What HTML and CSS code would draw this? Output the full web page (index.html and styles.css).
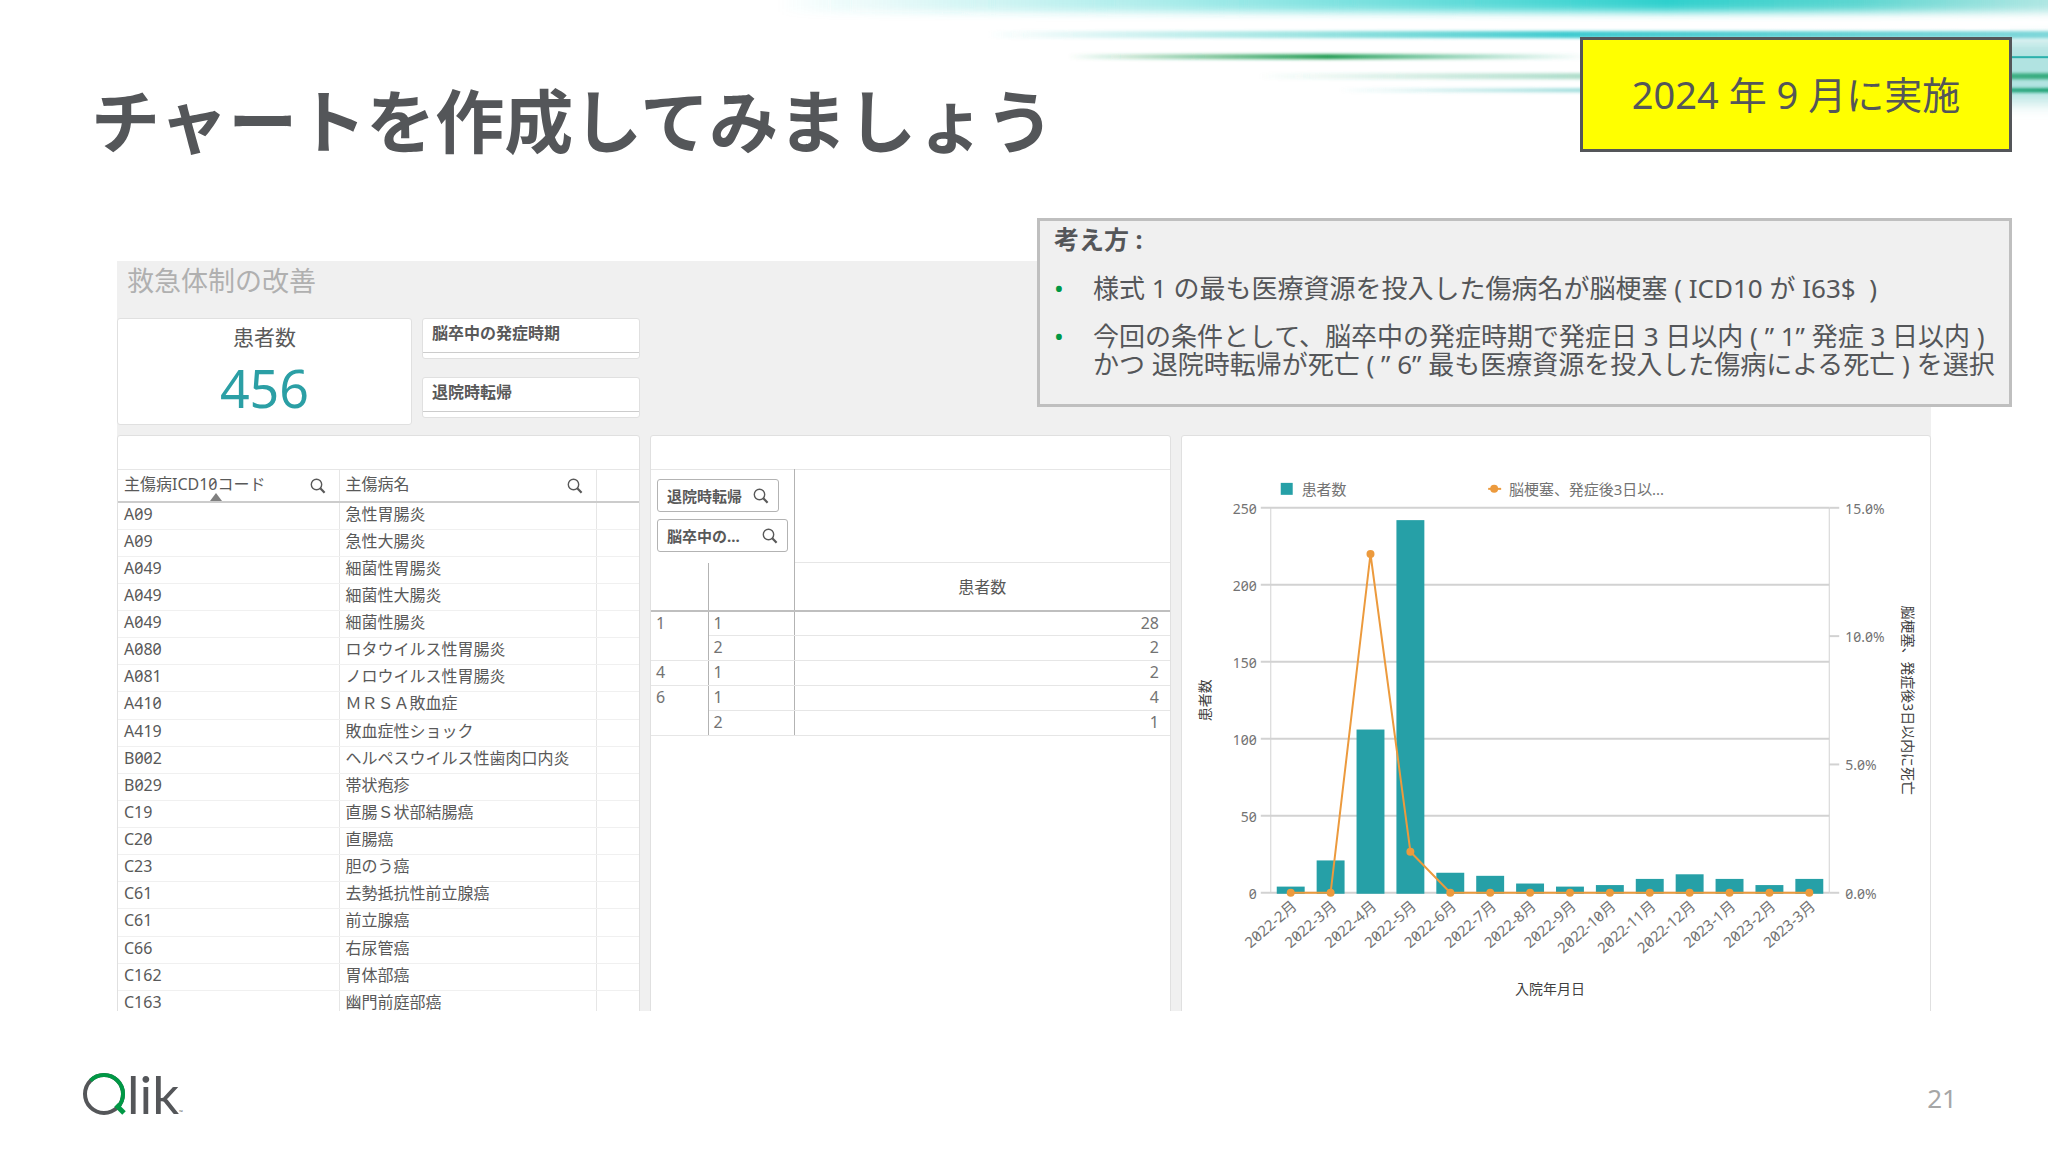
FILE: index.html
```html
<!DOCTYPE html>
<html lang="ja">
<head>
    <meta charset="UTF-8">
    <meta name="viewport" content="width=device-width, initial-scale=1.0">
    <title>チャートを作成してみましょう</title>
    <link rel="stylesheet" href="styles.css">
</head>
<body>
    <svg width="0" height="0" class="defs" aria-hidden="true">
        <symbol id="search" viewBox="0 0 16 16">
            <circle cx="6.5" cy="6.5" r="5.2" fill="none" stroke="#595959" stroke-width="1.4"/>
            <path d="M10.3 10.3 L14.6 14.8" stroke="#595959" stroke-width="2.2"/>
        </symbol>
    </svg>

    <div class="slide">
        <!-- light streaks in the corner -->
        <svg class="streaks" viewBox="0 0 1368 150" aria-hidden="true">
            <defs>
                <linearGradient id="g1">
                    <stop offset="0" stop-color="#2fd0cd" stop-opacity="0"/>
                    <stop offset="0.3" stop-color="#2fd0cd" stop-opacity="0.4"/>
                    <stop offset="0.7" stop-color="#2fd0cd"/>
                    <stop offset="0.85" stop-color="#40cfc8" stop-opacity="0.85"/>
                    <stop offset="1" stop-color="#60cfc8" stop-opacity="0.5"/>
                </linearGradient>
                <linearGradient id="g2">
                    <stop offset="0" stop-color="#3cc9c4" stop-opacity="0"/>
                    <stop offset="0.3" stop-color="#3cc9c4" stop-opacity="0.5"/>
                    <stop offset="0.55" stop-color="#3fcbd0"/>
                    <stop offset="1" stop-color="#4fc8cc" stop-opacity="0.7"/>
                </linearGradient>
                <linearGradient id="g3">
                    <stop offset="0" stop-color="#1c9a50" stop-opacity="0"/>
                    <stop offset="0.5" stop-color="#1c9a50"/>
                    <stop offset="1" stop-color="#4cc0a0" stop-opacity="0"/>
                </linearGradient>
                <linearGradient id="g4">
                    <stop offset="0" stop-color="#35ab7d" stop-opacity="0"/>
                    <stop offset="1" stop-color="#35ab7d"/>
                </linearGradient>
                <linearGradient id="g5">
                    <stop offset="0" stop-color="#35b7b5" stop-opacity="0"/>
                    <stop offset="0.5" stop-color="#35b7b5" stop-opacity="0.7"/>
                    <stop offset="1" stop-color="#119c6a"/>
                </linearGradient>
                <filter id="soft" x="-5%" y="-200%" width="110%" height="500%"><feGaussianBlur stdDeviation="0 4"/></filter>
                <filter id="fine" x="-5%" y="-200%" width="110%" height="500%"><feGaussianBlur stdDeviation="0 1.6"/></filter>
                <filter id="wide" x="-50%" y="-50%" width="200%" height="200%"><feGaussianBlur stdDeviation="0 8"/></filter>
            </defs>
            <rect x="100" y="-14" width="1268" height="26" fill="url(#g1)" filter="url(#soft)"/>
            <rect x="1330" y="40" width="38" height="62" fill="#a9e0de" opacity="0.9" filter="url(#wide)"/>
            <rect x="310" y="31" width="1058" height="7" fill="url(#g2)" filter="url(#fine)"/>
            <rect x="390" y="54" width="520" height="5" fill="url(#g3)" filter="url(#fine)"/>
            <rect x="1300" y="56" width="68" height="2" fill="#2bb0ac"/>
            <rect x="580" y="73" width="788" height="6" fill="url(#g4)" filter="url(#fine)"/>
            <rect x="660" y="88" width="708" height="4" fill="url(#g5)" filter="url(#fine)"/>
        </svg>

        <header class="slide-head">
            <h1>チャートを作成してみましょう</h1>
            <div class="badge">2024 年 9 月に実施</div>
        </header>

        <main class="content">
            <div class="sheet">
                <h2>救急体制の改善</h2>

                <div class="top-row">
                    <div class="kpi-area">
                        <section class="card kpi">
                            <div class="kpi-label">患者数</div>
                            <div class="kpi-value">456</div>
                        </section>
                        <div class="filters">
                            <section class="card filter"><h3>脳卒中の発症時期</h3></section>
                            <section class="card filter"><h3>退院時転帰</h3></section>
                        </div>
                    </div>
                </div>

                <div class="cards">
                    <section class="card list">
                        <table class="codes">
                            <thead>
                                <tr>
                                    <th class="sorted"><div class="th">主傷病ICD10コード<svg class="icon"><use href="#search"/></svg></div></th>
                                    <th><div class="th">主傷病名<svg class="icon"><use href="#search"/></svg></div></th>
                                    <th></th>
                                </tr>
                            </thead>
                            <tbody>
                                <tr><td>A09</td><td>急性胃腸炎</td><td></td></tr>
                                <tr><td>A09</td><td>急性大腸炎</td><td></td></tr>
                                <tr><td>A049</td><td>細菌性胃腸炎</td><td></td></tr>
                                <tr><td>A049</td><td>細菌性大腸炎</td><td></td></tr>
                                <tr><td>A049</td><td>細菌性腸炎</td><td></td></tr>
                                <tr><td>A080</td><td>ロタウイルス性胃腸炎</td><td></td></tr>
                                <tr><td>A081</td><td>ノロウイルス性胃腸炎</td><td></td></tr>
                                <tr><td>A410</td><td>ＭＲＳＡ敗血症</td><td></td></tr>
                                <tr><td>A419</td><td>敗血症性ショック</td><td></td></tr>
                                <tr><td>B002</td><td>ヘルペスウイルス性歯肉口内炎</td><td></td></tr>
                                <tr><td>B029</td><td>帯状疱疹</td><td></td></tr>
                                <tr><td>C19</td><td>直腸Ｓ状部結腸癌</td><td></td></tr>
                                <tr><td>C20</td><td>直腸癌</td><td></td></tr>
                                <tr><td>C23</td><td>胆のう癌</td><td></td></tr>
                                <tr><td>C61</td><td>去勢抵抗性前立腺癌</td><td></td></tr>
                                <tr><td>C61</td><td>前立腺癌</td><td></td></tr>
                                <tr><td>C66</td><td>右尿管癌</td><td></td></tr>
                                <tr><td>C162</td><td>胃体部癌</td><td></td></tr>
                                <tr><td>C163</td><td>幽門前庭部癌</td><td></td></tr>
                            </tbody>
                        </table>
                    </section>

                    <section class="card pivot-card">
                        <table class="pivot">
                            <colgroup><col class="c1"><col class="c2"><col></colgroup>
                            <thead>
                                <tr>
                                    <th colspan="2" class="dims">
                                        <button type="button">退院時転帰<svg class="icon"><use href="#search"/></svg></button>
                                        <button type="button" class="long">脳卒中の...<svg class="icon"><use href="#search"/></svg></button>
                                    </th>
                                    <th></th>
                                </tr>
                                <tr class="measure"><th></th><th></th><th>患者数</th></tr>
                            </thead>
                            <tbody>
                                <tr><td rowspan="2">1</td><td>1</td><td>28</td></tr>
                                <tr><td>2</td><td>2</td></tr>
                                <tr><td>4</td><td>1</td><td>2</td></tr>
                                <tr><td rowspan="2">6</td><td>1</td><td>4</td></tr>
                                <tr><td>2</td><td>1</td></tr>
                            </tbody>
                        </table>
                    </section>

                    <section class="card chart-card">
                        <svg id="chart" class="chart" viewBox="0 0 750 575"></svg>
                    </section>
                </div>
            </div>

            <aside class="note">
                <h3>考え方 :</h3>
                <ul>
                    <li>様式 1 の最も医療資源を投入した傷病名が脳梗塞 ( ICD10 が I63$ &nbsp;)</li>
                    <li>今回の条件として、脳卒中の発症時期で発症日 3 日以内 ( ” 1” 発症 3 日以内 )<br>かつ 退院時転帰が死亡 ( ” 6” 最も医療資源を投入した傷病による死亡 ) を選択</li>
                </ul>
            </aside>
        </main>

        <footer>
            <svg class="logo" width="112" height="48" viewBox="0 0 112 48" role="img" aria-label="Qlik">
                <circle cx="22" cy="24" r="19" fill="none" stroke="#545659" stroke-width="4"/>
                <path d="M8.5 10.6 A19 19 0 0 1 35.5 37.4" fill="none" stroke="#009845" stroke-width="4"/>
                <path d="M34 35 L42 43" stroke="#009845" stroke-width="5"/>
                <text x="45" y="44" class="logo-text">lik</text>
                <text x="97" y="44" class="logo-tm">™</text>
            </svg>
            <span class="page">21</span>
        </footer>
    </div>

    <script>
        const months = ["2022-2月", "2022-3月", "2022-4月", "2022-5月", "2022-6月", "2022-7月", "2022-8月",
                        "2022-9月", "2022-10月", "2022-11月", "2022-12月", "2023-1月", "2023-2月", "2023-3月"];
        const patients = [4, 21, 106, 242, 13, 11, 6, 4, 5, 9, 12, 9, 5, 9];
        const rate = [0, 0, 13.2, 1.6, 0, 0, 0, 0, 0, 0, 0, 0, 0, 0];

        // plot area inside the card
        const left = 89, right = 649, top1 = 72, bottom = 458;
        const step = (right - left) / months.length;
        const y1 = v => bottom - v / 250 * (bottom - top1);
        const y2 = v => bottom - v / 15 * (bottom - top1);
        const cx = i => left + step * (i + 0.5);

        let out = "";
        for (let v = 0; v <= 250; v += 50) {
            out += `<line class="grid" x1="79" x2="${right}" y1="${y1(v)}" y2="${y1(v)}"/>`;
            out += `<text class="tick" x="75" y="${y1(v) + 6}" text-anchor="end">${v}</text>`;
        }
        for (let v = 0; v <= 15; v += 5) {
            out += `<line class="grid" x1="${right}" x2="${right + 10}" y1="${y2(v)}" y2="${y2(v)}"/>`;
            out += `<text class="tick" x="${right + 16}" y="${y2(v) + 6}">${v.toFixed(1)}%</text>`;
        }
        out += `<line class="axis" x1="${left}" x2="${left}" y1="${top1}" y2="${bottom}"/>`;
        out += `<line class="axis" x1="${right}" x2="${right}" y1="${top1}" y2="${bottom}"/>`;
        months.forEach((m, i) => {
            out += `<rect class="bar" x="${cx(i) - 14}" y="${y1(patients[i])}" width="28" height="${bottom - y1(patients[i]) + 1}"/>`;
            out += `<text class="month" transform="translate(${cx(i) + 7} ${bottom + 15}) rotate(-41)" text-anchor="end">${m}</text>`;
        });
        out += `<polyline class="rate" points="${rate.map((r, i) => cx(i) + "," + y2(r)).join(" ")}"/>`;
        rate.forEach((r, i) => {
            out += `<circle class="dot" cx="${cx(i)}" cy="${y2(r)}" r="4"/>`;
        });

        // legend and axis titles
        out += `<rect class="bar" x="99" y="47" width="12" height="12"/><text class="label" x="120" y="59">患者数</text>`;
        out += `<line class="rate" x1="307" x2="320" y1="53" y2="53"/><circle class="dot" cx="313" cy="53" r="4"/>`;
        out += `<text class="label" x="328" y="59">脳梗塞、発症後3日以...</text>`;
        out += `<text class="title" x="369" y="560" text-anchor="middle">入院年月日</text>`;
        out += `<text class="title" transform="translate(28 265) rotate(-90)" text-anchor="middle">患者数</text>`;
        out += `<text class="title" transform="translate(723 265) rotate(90)" text-anchor="middle">脳梗塞、発症後3日以内に死亡</text>`;
        document.getElementById("chart").innerHTML = out;
    </script>
</body>
</html>
```
FILE: styles.css
```css
* {
    box-sizing: border-box;
}
body {
    margin: 0;
    background-color: #fff;
    color: #545659;
    font-family: "Noto Sans", "Noto Sans CJK JP", sans-serif;
    font-variant-numeric: slashed-zero;
}
h1, h2, h3, ul {
    margin: 0;
    padding: 0;
}
.defs {
    position: absolute;
}
.slide {
    position: relative;
    min-height: 100vh;
    display: flex;
    flex-direction: column;
    overflow: hidden;
}
.streaks {
    position: absolute;
    top: 0;
    right: 0;
    width: 67%;
}
.slide-head {
    position: relative;
    display: flex;
    justify-content: space-between;
    align-items: flex-start;
    height: 261px;
    padding: 37px 36px 0 91px;
    flex: none;
}
h1 {
    margin-top: 34px;
    font-size: 69px;
    line-height: 100px;
    font-weight: bold;
}
.badge {
    width: 432px;
    height: 115px;
    border: 3px solid #545659;
    background-color: #ff0;
    font-size: 38px;
    line-height: 109px;
    text-align: center;
    font-variant-numeric: normal;
}
.content {
    position: relative;
    margin: 0 117px;
}
.sheet {
    height: 750px;
    overflow: hidden;
    background-color: #f0f0f0;
    color: #595959;
    font-size: 16px;
}
.sheet h2 {
    height: 57px;
    padding-left: 10px;
    font-size: 27px;
    line-height: 40px;
    font-weight: normal;
    color: #b0b0b0;
}
.card {
    background-color: #fff;
    border: 1px solid #e0e0e0;
    border-radius: 3px;
}
.top-row, .cards {
    display: grid;
    grid-template-columns: 523fr 521fr 750fr;
    gap: 10px;
}
.kpi-area {
    display: flex;
    gap: 10px;
    height: 107px;
}
.kpi {
    flex: 1;
    text-align: center;
}
.kpi-label {
    font-size: 21px;
    line-height: 36px;
}
.kpi-value {
    font-size: 52px;
    line-height: 66px;
    color: #2b9fa5;
}
.filters {
    width: 218px;
    display: flex;
    flex-direction: column;
    gap: 18px;
}
.filter {
    height: 41px;
}
.filter h3 {
    height: 34px;
    padding-left: 9px;
    border-bottom: 1px solid #ccc;
    font-size: 16px;
    line-height: 29px;
}
.cards {
    margin-top: 10px;
}
.cards .card {
    height: 600px;
}
.icon {
    width: 16px;
    height: 16px;
    flex: none;
}
table {
    width: 100%;
    border-collapse: collapse;
    table-layout: fixed;
}
th {
    font-weight: normal;
}
.list, .pivot-card {
    padding-top: 33px;
}
.codes {
    height: 549px;
    border-top: 1px solid #e6e6e6;
}
.codes th, .codes td {
    padding: 0 0 0 6px;
    text-align: left;
    line-height: 22px;
    border-right: 1px solid #e6e6e6;
    vertical-align: top;
}
.codes td {
    border-bottom: 1px solid #f0f0f0;
}
.codes th:first-child {
    width: 221px;
}
.codes th:last-child {
    width: 43px;
}
.codes th:last-child, .codes td:last-child {
    border-right: 0;
}
.codes th {
    height: 32px;
    border-bottom: 2px solid #ccc;
}
.th {
    display: flex;
    justify-content: space-between;
    align-items: center;
    padding-right: 13px;
    line-height: 28px;
}
.th .icon {
    margin-top: 4px;
}
.sorted {
    position: relative;
}
.sorted::after {
    content: "";
    position: absolute;
    bottom: 0;
    left: 50%;
    margin-left: -18px;
    border: 6px solid transparent;
    border-top: 0;
    border-bottom: 8px solid #808080;
}
.pivot {
    border-top: 1px solid #e6e6e6;
}
.pivot .c1 {
    width: 57px;
}
.pivot .c2 {
    width: 86px;
}
.pivot .dims {
    height: 93px;
    padding: 9px 0 0 6px;
    text-align: left;
    vertical-align: top;
    border-right: 1px solid #b3b3b3;
}
.dims button {
    display: flex;
    justify-content: space-between;
    align-items: center;
    width: 122px;
    height: 33px;
    margin-bottom: 7px;
    padding: 0 9px;
    border: 1px solid #b3b3b3;
    border-radius: 3px;
    background-color: #fff;
    color: #595959;
    font-family: inherit;
    font-size: 15px;
    font-weight: bold;
    white-space: nowrap;
}
.dims .long {
    width: 131px;
}
.measure th {
    height: 48px;
    border-right: 1px solid #b3b3b3;
    border-bottom: 2px solid #bfbfbf;
}
.measure th:last-child {
    border-right: 0;
    border-top: 1px solid #e6e6e6;
}
.pivot td {
    height: 25px;
    padding: 0 5px;
    line-height: 22px;
    vertical-align: top;
    color: #737373;
    border-right: 1px solid #b3b3b3;
    border-bottom: 1px solid #e6e6e6;
}
.pivot td:last-child {
    padding-right: 11px;
    text-align: right;
    border-right: 0;
}
.chart {
    display: block;
    width: 100%;
}
.grid, .axis {
    stroke: #d2d2d2;
    stroke-width: 2;
}
.axis {
    stroke-width: 1;
}
.bar {
    fill: #26a0a7;
}
.rate {
    fill: none;
    stroke: #ec9a3d;
    stroke-width: 2;
}
.dot {
    fill: #ec9a3d;
}
.tick {
    font-size: 14px;
    fill: #737373;
}
.month {
    font-size: 15px;
    fill: #737373;
}
.label {
    font-size: 15px;
    fill: #737373;
}
.title {
    font-size: 14px;
    fill: #404040;
}
.note {
    position: absolute;
    top: -43px;
    right: -81px;
    width: 975px;
    height: 189px;
    padding: 0 14px;
    border: 3px solid #bfbfbf;
    background-color: #f0f0f0;
    font-size: 26px;
    line-height: 28px;
    white-space: nowrap;
    font-variant-numeric: normal;
}
.note h3 {
    font-size: 25px;
    line-height: 36px;
}
.note ul {
    list-style: none;
}
.note li {
    position: relative;
    padding-left: 39px;
    margin-top: 20px;
}
.note li:first-child {
    margin-top: 17px;
}
.note li::before {
    content: "•";
    position: absolute;
    left: 0;
    color: #009845;
}
footer {
    display: flex;
    justify-content: space-between;
    align-items: center;
    padding: 59px 91px 0 82px;
}
.logo-text {
    font-family: Lato, sans-serif;
    font-size: 53px;
    fill: #545659;
}
.logo-tm {
    font-size: 5px;
    fill: #545659;
}
.page {
    margin-top: 8px;
    font-size: 26px;
    line-height: 40px;
    color: #a6a6a6;
}
```
